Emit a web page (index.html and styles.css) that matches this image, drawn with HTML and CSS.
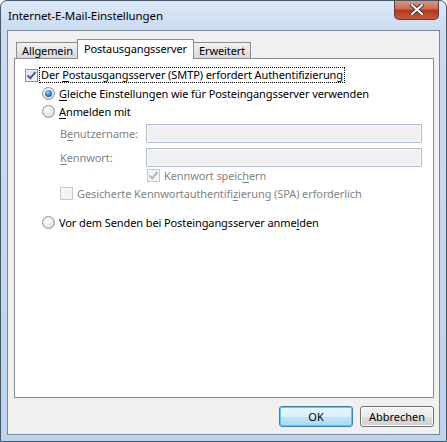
FILE: index.html
```html
<!DOCTYPE html>
<html lang="de">
<head>
    <meta charset="UTF-8">
    <title>Internet-E-Mail-Einstellungen</title>
    <link rel="stylesheet" href="styles.css">
</head>
<body>

    <div class="window">
        <div class="titlebar">
            <span class="title">Internet-E-Mail-Einstellungen</span>
            <div class="close-btn">
                <svg width="14" height="11" viewBox="0 0 14 11">
                    <path d="M2 1 L12 10 M12 1 L2 10" stroke="#3a3a3a" stroke-width="4" stroke-linecap="square"/>
                    <path d="M2 1 L12 10 M12 1 L2 10" stroke="#ffffff" stroke-width="2" stroke-linecap="square"/>
                </svg>
            </div>
        </div>

        <div class="client">
            <div class="tabs">
                <div class="tab">Allgemein</div>
                <div class="tab active">Postausgangsserver</div>
                <div class="tab">Erweitert</div>
            </div>

            <div class="panel">
                <div class="row row-top">
                    <span class="check checked"></span>
                    <span class="focus">Der <u>P</u>ostausgangsserver (SMTP) erfordert Authentifizierung</span>
                </div>

                <div class="indent">
                    <div class="row row-radio1">
                        <span class="radio selected"></span>
                        <span><u>G</u>leiche Einstellungen wie für Posteingangsserver verwenden</span>
                    </div>
                    <div class="row row-radio2">
                        <span class="radio"></span>
                        <span><u>A</u>nmelden mit</span>
                    </div>

                    <div class="sub">
                        <div class="field">
                            <span class="label disabled">B<u>e</u>nutzername:</span>
                            <span class="input"></span>
                        </div>
                        <div class="field">
                            <span class="label disabled"><u>K</u>ennwort:</span>
                            <span class="input"></span>
                        </div>
                        <div class="row row-save">
                            <span class="check checked off"></span>
                            <span class="disabled">Kennwort speic<u>h</u>ern</span>
                        </div>
                        <div class="row row-spa">
                            <span class="check off"></span>
                            <span class="disabled">Gesicherte Kennwortauthentifi<u>z</u>ierung (SPA) erforderlich</span>
                        </div>
                    </div>

                    <div class="row row-radio3">
                        <span class="radio"></span>
                        <span>Vor dem Senden bei Posteingangsserver anme<u>l</u>den</span>
                    </div>
                </div>
            </div>

            <div class="buttons">
                <button class="btn default">OK</button>
                <button class="btn">Abbrechen</button>
            </div>
        </div>
    </div>

</body>
</html>
```

FILE: styles.css
```css
body {
    margin: 0;
    padding: 0;
    background: #ffffff;
    font-family: 'Noto Sans', 'Open Sans', sans-serif;
    font-size: 11px;
    letter-spacing: -0.1px;
    color: #000;
}

.window {
    width: 447px;
    height: 442px;
    box-sizing: border-box;
    border: 1px solid #4a5665;
    border-radius: 7px 7px 0 0;
    background: linear-gradient(to bottom, #dce9f7 0px, #c9dcf1 30px, #bdd4ee 100%);
    position: relative;
    overflow: hidden;
}

.titlebar {
    height: 29px;
    padding-left: 7px;
    display: flex;
    align-items: center;
}

.title {
    font-size: 11.5px;
}

.close-btn {
    position: absolute;
    top: -1px;
    right: 7px;
    width: 45px;
    height: 20px;
    box-sizing: border-box;
    border: 1px solid #5b3b3b;
    border-top: none;
    border-radius: 0 0 5px 5px;
    background: linear-gradient(to bottom, #df9a8c 0%, #cf6a56 45%, #b8371d 55%, #c9553a 100%);
    display: flex;
    align-items: center;
    justify-content: center;
}

.client {
    margin: 0 6px;
    height: 405px;
    box-sizing: border-box;
    border: 1px solid #7c8796;
    background: #f0f0f0;
    padding: 8px 5px 0 6px;
}

.tabs {
    display: flex;
    align-items: flex-end;
    height: 19px;
    padding-left: 2px;
    position: relative;
    z-index: 1;
}

.tab {
    height: 16px;
    box-sizing: border-box;
    border: 1px solid #898c95;
    border-bottom: none;
    padding: 0 5px;
    line-height: 15px;
    background: linear-gradient(to bottom, #f3f3f3, #e5e5e5 50%, #d9d9d9);
    margin-right: -1px;
}

.tab.active {
    height: 20px;
    margin: 0 -1px -1px -1px;
    padding: 0 6px;
    background: #ffffff;
    line-height: 17px;
    position: relative;
    z-index: 2;
}

.panel {
    height: 340px;
    box-sizing: border-box;
    border: 1px solid #898c95;
    background: #ffffff;
    padding: 8px 0 0 10px;
}

.row {
    display: flex;
    align-items: center;
    gap: 4px;
    height: 16px;
}

.indent {
    padding-left: 17px;
}

.row-radio1 {
    margin-top: 2px;
}

.row-radio2 {
    margin-top: 2px;
}

.sub {
    padding-left: 18px;
    padding-top: 5px;
}

.field {
    display: flex;
    align-items: center;
    height: 19px;
    margin-bottom: 5px;
}

.label {
    width: 86px;
}

.input {
    width: 274px;
    height: 17px;
    border: 1px solid #b3c1d3;
    box-shadow: inset 0 0 0 1px #f7f7f7;
    background: #f0f0f0;
}

.row-save {
    margin-left: 87px;
    margin-top: -5px;
}

.row-spa {
    margin-top: 2px;
}

.row-radio3 {
    margin-top: 13px;
}

.disabled {
    color: #838383;
}

u {
    text-decoration-thickness: 1px;
    text-underline-offset: 2px;
}

.focus {
    outline: 1px dotted #000;
    outline-offset: 0;
    padding: 0 1px;
    margin-left: -2px;
    line-height: 14px;
}

.check {
    width: 13px;
    height: 13px;
    box-sizing: border-box;
    border: 1px solid #8e8f8f;
    background: linear-gradient(135deg, #dcdcdc, #fbfbfb);
    box-shadow: inset 0 0 0 1px #f4f4f4;
    position: relative;
    flex: none;
}

.check.checked::after {
    content: "";
    position: absolute;
    left: 3px;
    top: 0px;
    width: 3px;
    height: 7px;
    border-right: 2px solid #4b5f99;
    border-bottom: 2px solid #4b5f99;
    transform: rotate(40deg);
}

.check.off {
    border-color: #c9c9c9;
    background: #f4f4f4;
}

.check.off.checked::after {
    border-color: #b7b7b7;
}

.radio {
    width: 13px;
    height: 13px;
    box-sizing: border-box;
    border-radius: 50%;
    border: 1px solid #8d9092;
    background: radial-gradient(circle at 40% 35%, #ffffff, #e4e4e4 60%, #c8c8c8);
    position: relative;
    flex: none;
}

.radio.selected::after {
    content: "";
    position: absolute;
    left: 2px;
    top: 2px;
    width: 7px;
    height: 7px;
    border-radius: 50%;
    background: radial-gradient(circle at 40% 35%, #9fd7fb, #2276c8 55%, #114c8a);
}

.buttons {
    display: flex;
    justify-content: flex-end;
    gap: 7px;
    padding-top: 8px;
}

.btn {
    font-family: inherit;
    font-size: 11px;
    width: 74px;
    height: 21px;
    padding: 0;
    border: 1px solid #707070;
    border-radius: 3px;
    background: linear-gradient(to bottom, #f2f2f2 0%, #ebebeb 50%, #dddddd 51%, #cfcfcf 100%);
    box-shadow: inset 0 0 0 1px #fcfcfc;
    color: #000;
}

.btn.default {
    border-color: #3c7fb1;
    background: linear-gradient(to bottom, #eaf6fd 0%, #d9f0fc 50%, #bee6fd 51%, #a7d9f5 100%);
    box-shadow: inset 0 0 0 1px #48d6f7;
}
```
